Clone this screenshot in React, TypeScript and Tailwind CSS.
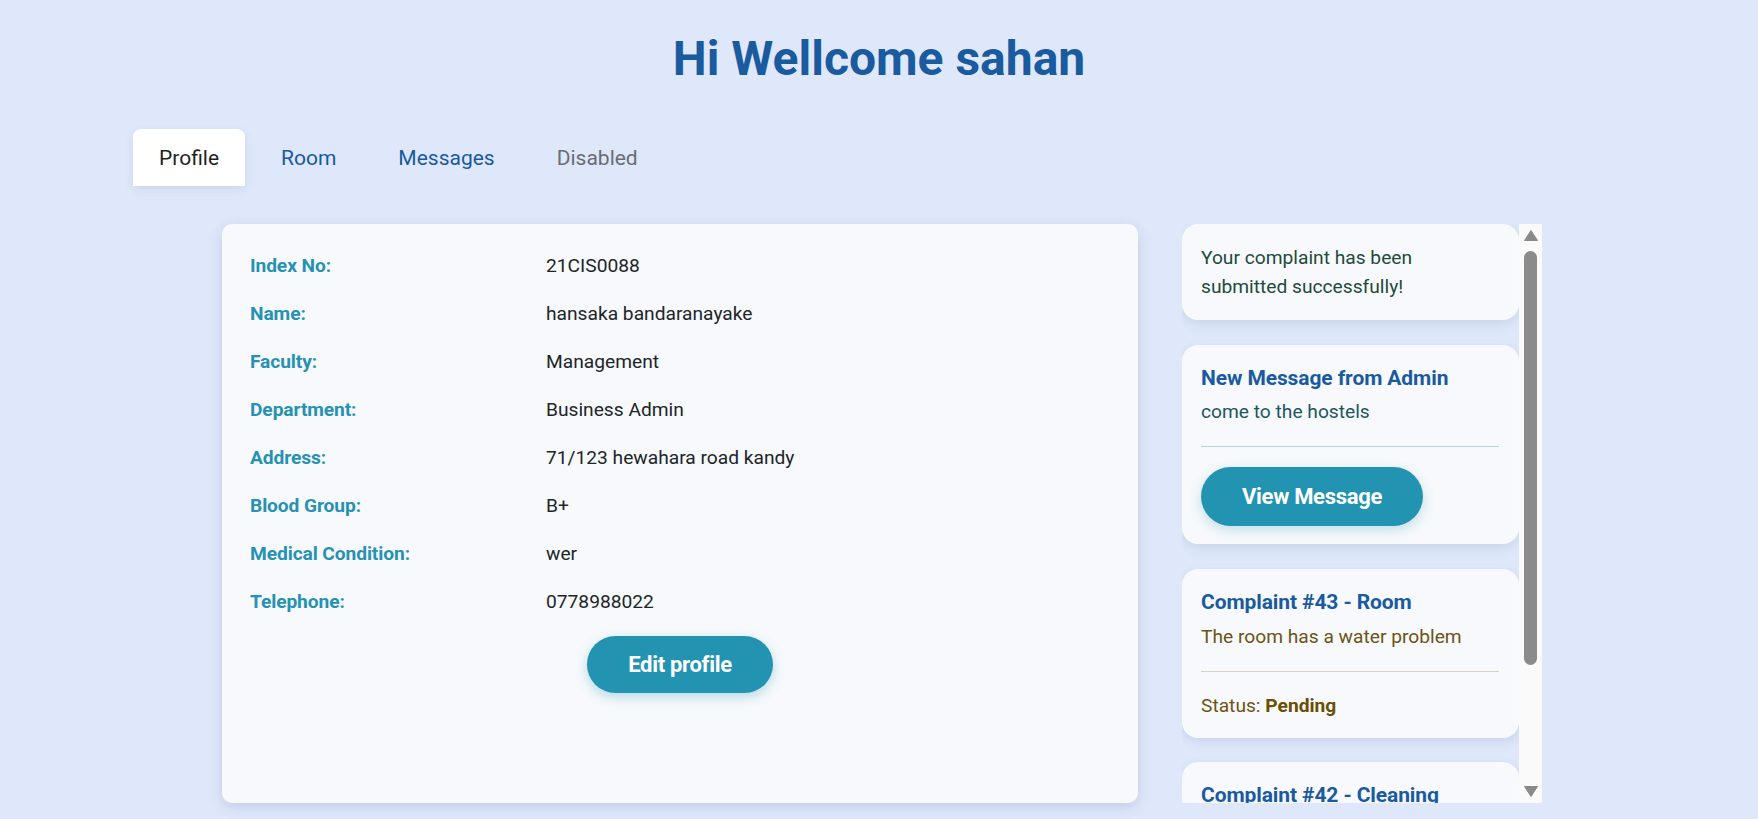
import React from "react";

const profile = [
  ["Index No:", "21CIS0088"],
  ["Name:", "hansaka bandaranayake"],
  ["Faculty:", "Management"],
  ["Department:", "Business Admin"],
  ["Address:", "71/123 hewahara road kandy"],
  ["Blood Group:", "B+"],
  ["Medical Condition:", "wer"],
  ["Telephone:", "0778988022"],
];

const tabs = ["Profile", "Room", "Messages", "Disabled"];

const Tabs = () => {
  return (
    <div className="flex gap-[10px] pl-[133px] mt-[43px]">
      {tabs.map((t, i) => (
        <button
          key={t}
          className={
            i === 0
              ? "h-[57px] px-[26px] text-[21px] leading-[24px] rounded-t-[8px] bg-white text-[#1f1f1f] shadow-[0_3px_10px_rgba(60,90,150,0.12)]"
              : i === 3
              ? "h-[57px] px-[26px] text-[21px] leading-[24px] text-[#686e74]"
              : "h-[57px] px-[26px] text-[21px] leading-[24px] text-[#1a5a9e]"
          }
        >
          {t}
        </button>
      ))}
    </div>
  );
};

const ProfileCard = () => {
  return (
    <div className="w-[916px] h-[579px] shrink-0 rounded-[10px] bg-[#f7f9fc] shadow-[0_4px_14px_rgba(40,70,130,0.16)] pt-[28px] px-[28px] flex flex-col">
      <div className="flex flex-col gap-[20px]">
        {profile.map(([k, v]) => (
          <div key={k} className="flex text-[19.2px] leading-[28px]">
            <span className="w-[296px] font-bold text-[#2692b3] tracking-[-0.1px]">{k}</span>
            <span className="text-[#212529]">{v}</span>
          </div>
        ))}
      </div>
      <button className="mt-[20px] self-center w-[186px] h-[57px] rounded-full bg-[#2293b0] text-white text-[22px] font-bold tracking-[-0.3px] shadow-[0_4px_12px_rgba(34,147,176,0.3)]">
        Edit profile
      </button>
    </div>
  );
};

const Card = ({ children }: { children: React.ReactNode }) => (
  <div className="w-[337px] shrink-0 rounded-[16px] bg-[#f7f9fc] shadow-[0_4px_12px_rgba(40,70,130,0.12)] pt-[19px] pb-[18px] pl-[19px] pr-[20px]">
    {children}
  </div>
);

const Title = ({ children }: { children: React.ReactNode }) => (
  <h3 className="text-[21px] leading-[28.8px] font-bold text-[#1a5a9e] tracking-[-0.1px] whitespace-nowrap">{children}</h3>
);

const Arrow = ({ up }: { up?: boolean }) => (
  <svg width="14" height="11" viewBox="0 0 14 11" className="mx-auto">
    <path d={up ? "M7 0.5 L13.5 10.5 L0.5 10.5 Z" : "M0.5 0.5 L13.5 0.5 L7 10.5 Z"} fill="#8a8a8a" strokeLinejoin="round" stroke="#8a8a8a" strokeWidth="1" />
  </svg>
);

const MessageList = () => {
  return (
    <div className="flex h-[579px]">
      <div className="h-full overflow-hidden flex flex-col gap-[24.5px]">
        <div className="w-[337px] shrink-0 rounded-[16px] bg-[#f7f9fc] shadow-[0_4px_12px_rgba(40,70,130,0.12)] py-[19px] pl-[19px] pr-[20px] text-[19.2px] leading-[29px] text-[#1f4a3a]">
          Your complaint has been
          <br />
          submitted successfully!
        </div>
        <Card>
          <Title>New Message from Admin</Title>
          <p className="mt-[5px] text-[19.2px] leading-[29px] text-[#1d5660]">come to the hostels</p>
          <div className="my-[20px] h-px bg-[#b7d0da]" />
          <button className="w-[222px] h-[59px] rounded-full bg-[#2293b0] text-white text-[22px] font-bold tracking-[-0.3px] shadow-[0_4px_12px_rgba(34,147,176,0.25)]">
            View Message
          </button>
        </Card>
        <Card>
          <Title>Complaint #43 - Room</Title>
          <p className="mt-[5px] text-[19.2px] leading-[29px] text-[#6b5414]">The room has a water problem</p>
          <div className="mt-[20px] mb-[19px] h-px bg-[#d9d0bf]" />
          <p className="text-[19.2px] leading-[29px] text-[#6b5414]">
            Status: <span className="font-bold text-[#6b4f00]">Pending</span>
          </p>
        </Card>
        <Card>
          <Title>Complaint #42 - Cleaning</Title>
          <p className="mt-[5px] text-[19.2px] leading-[29px] text-[#6b5414]">The bathroom needs cleaning</p>
          <div className="mt-[20px] mb-[19px] h-px bg-[#d9d0bf]" />
          <p className="text-[19.2px] leading-[29px] text-[#6b5414]">
            Status: <span className="font-bold text-[#6b4f00]">Pending</span>
          </p>
        </Card>
      </div>
      <div className="w-[23px] h-full bg-[#fafafa] flex flex-col pt-[6px] pb-[6px]">
        <Arrow up />
        <div className="mt-[10px] mx-auto w-[13px] h-[414px] rounded-full bg-[#8b8b8b]" />
        <div className="flex-1" />
        <Arrow />
      </div>
    </div>
  );
};

export default function App() {
  return (
    <div className="min-h-screen bg-[#dfe8fa] font-['Roboto',sans-serif] pt-[31px]">
      <h1 className="text-center text-[48px] leading-[55px] font-bold text-[#1a5a9e]">Hi Wellcome sahan</h1>
      <Tabs />
      <div className="flex gap-[44px] ml-[222px] mt-[38px]">
        <ProfileCard />
        <MessageList />
      </div>
    </div>
  );
}
